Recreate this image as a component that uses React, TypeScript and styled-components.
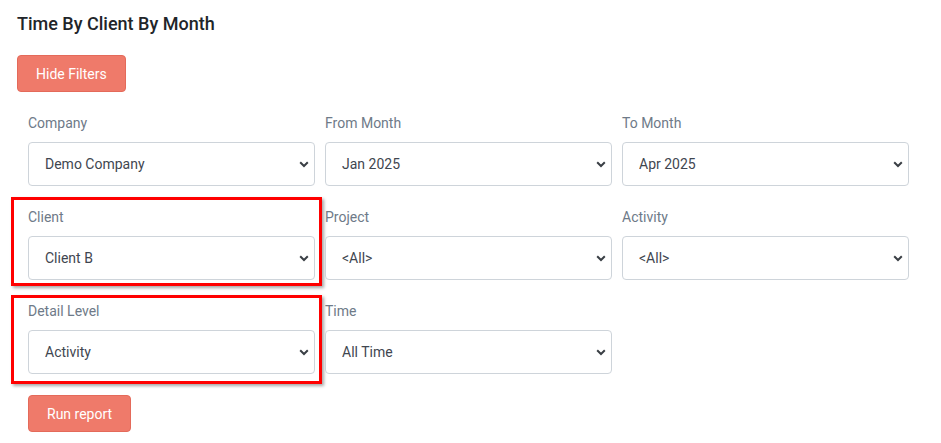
import type { FC } from "react";
import styled, { createGlobalStyle } from "styled-components";

const GlobalStyle = createGlobalStyle`
  html, body {
    margin: 0;
    padding: 0;
    background: #ffffff;
  }
  body {
    font-family: Roboto, "Liberation Sans", Arial, sans-serif;
    color: #212529;
  }
`;

const Page = styled.div`
  padding: 12px 17px 20px;
`;

const Title = styled.h1`
  margin: 0 0 19px;
  font-size: 18px;
  line-height: 24px;
  font-weight: 500;
  color: #212529;
`;

const Button = styled.button`
  display: block;
  height: 37px;
  padding: 0 18px;
  border: 1px solid #e46a5a;
  border-radius: 4px;
  background: #ef7a6a;
  color: #ffffff;
  font-family: inherit;
  font-size: 14px;
  cursor: pointer;
`;

const FilterGrid = styled.div`
  display: grid;
  grid-template-columns: repeat(3, 287px);
  column-gap: 10px;
  row-gap: 21px;
  margin: 21px 0 0 11px;
`;

const Field = styled.div<{ $mark?: [number, number] }>`
  position: relative;
  display: flex;
  flex-direction: column;

  ${({ $mark }) =>
    $mark &&
    `
    &::after {
      content: "";
      position: absolute;
      left: -17px;
      right: -7px;
      top: -${$mark[0]}px;
      bottom: -${$mark[1]}px;
      border: 3px solid #ff0000;
      box-shadow: 2px 2px 3px rgba(0, 0, 0, 0.35);
      pointer-events: none;
    }
  `}
`;

const Label = styled.label`
  font-size: 14px;
  line-height: 21px;
  color: #6e7a88;
  margin-bottom: 8px;
`;

const SelectWrap = styled.div`
  position: relative;
  height: 44px;
`;

const Select = styled.select`
  appearance: none;
  width: 100%;
  height: 100%;
  box-sizing: border-box;
  padding: 0 30px 0 16px;
  border: 1px solid #ced4da;
  border-radius: 4px;
  background: #ffffff;
  color: #3f4650;
  font-family: inherit;
  font-size: 14px;
  outline: none;
`;

const Chevron = styled.svg`
  position: absolute;
  right: 6px;
  top: 50%;
  width: 10px;
  height: 7px;
  margin-top: -3px;
  pointer-events: none;
`;

const RunButton = styled(Button)`
  margin: 21px 0 0 11px;
`;

type Filter = {
  label: string;
  value: string;
  mark?: [number, number];
};

const filters: Filter[] = [
  { label: "Company", value: "Demo Company" },
  { label: "From Month", value: "Jan 2025" },
  { label: "To Month", value: "Apr 2025" },
  { label: "Client", value: "Client B", mark: [10, 6] },
  { label: "Project", value: "<All>" },
  { label: "Activity", value: "<All>" },
  { label: "Detail Level", value: "Activity", mark: [6, 10] },
  { label: "Time", value: "All Time" },
];

const App: FC = () => {
  return (
    <Page>
      <GlobalStyle />
      <Title>Time By Client By Month</Title>
      <Button>Hide Filters</Button>
      <FilterGrid>
        {filters.map((f) => (
          <Field key={f.label} $mark={f.mark}>
            <Label>{f.label}</Label>
            <SelectWrap>
              <Select defaultValue={f.value}>
                <option>{f.value}</option>
              </Select>
              <Chevron viewBox="0 0 10 7">
                <polyline
                  points="1.2,1.3 5,5 8.8,1.3"
                  fill="none"
                  stroke="#3a3f45"
                  strokeWidth="2"
                />
              </Chevron>
            </SelectWrap>
          </Field>
        ))}
      </FilterGrid>
      <RunButton>Run report</RunButton>
    </Page>
  );
};

export default App;
